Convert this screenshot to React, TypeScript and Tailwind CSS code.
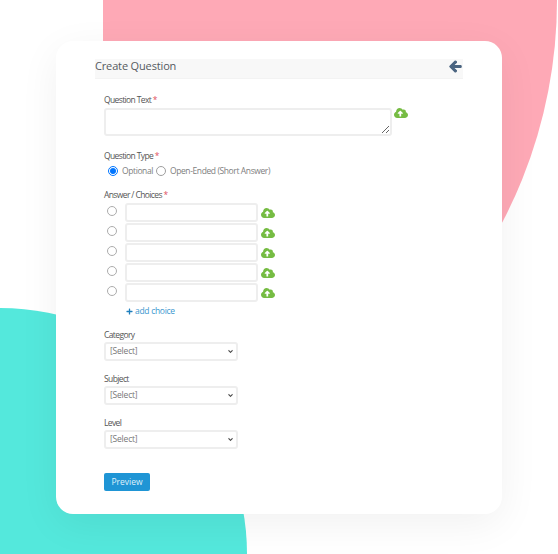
import { FaArrowLeft, FaChevronDown, FaCloudUploadAlt, FaPlus } from "react-icons/fa";

const choices = [1, 2, 3, 4, 5];
const dropdowns = ["Category", "Subject", "Level"];

function Upload({ className }: { className: string }) {
    return <FaCloudUploadAlt className={`text-[14px] text-[#76bc43] shrink-0 ${className}`} />;
}

function Required() {
    return <span className="text-[#e0505f]"> *</span>;
}

export default function App() {
    return (
        <div className="relative w-[558px] h-[554px] overflow-hidden bg-white font-['Open_Sans',sans-serif]">
            {/* background blobs */}
            <div className="absolute left-[103px] top-0 w-[454px] h-[467px] bg-[#fea9b6] rounded-br-[454px_467px]" />
            <div className="absolute left-0 top-[308px] w-[247px] h-[246px] bg-[#54e8dc] rounded-tr-[247px_246px]" />

            <div className="relative ml-[56px] pt-[41px] w-[446px]">
                <div className="h-[473px] bg-white rounded-[17px] shadow-[0_10px_40px_rgba(0,0,0,0.06)] pt-[18px] px-[39px]">
                    <div className="flex items-center justify-between h-[20px] bg-[#f8f8f8] border-b border-[#f3f3f3] pb-[5px] pr-[1px]">
                        <h1 className="text-[11px] leading-[14px] tracking-[-0.15px] text-[#555a60]">Create Question</h1>
                        <FaArrowLeft className="text-[13px] text-[#4a6480] stroke-[40]" />
                    </div>

                    <form className="pl-[9px] pt-[15px]">
                        <label className="block text-[8.5px] leading-[12px] tracking-[-0.62px] text-[#555]">
                            Question Text<Required />
                        </label>
                        <div className="flex items-start mt-[2px]">
                            <textarea className="block w-[288px] h-[28px] bg-white border-2 border-[#eeeeee] rounded-[3px]" />
                            <Upload className="ml-[2px] mt-[-2px]" />
                        </div>

                        <label className="block mt-[14px] text-[8.5px] leading-[12px] tracking-[-0.62px] text-[#555]">
                            Question Type<Required />
                        </label>
                        <div className="flex items-center mt-[3px] h-[13px] text-[8.5px] tracking-[-0.4px] text-[#808080]">
                            <input type="radio" name="qtype" defaultChecked className="w-[10px] h-[10px] ml-[4px] mr-[4px] mb-[2px]" />
                            <span>Optional</span>
                            <input type="radio" name="qtype" className="w-[10px] h-[10px] ml-[3px] mr-[4px] mb-[2px] opacity-70" />
                            <span>Open-Ended (Short Answer)</span>
                        </div>

                        <label className="block mt-[11px] text-[8.5px] leading-[12px] tracking-[-0.62px] text-[#555]">
                            Answer / Choices<Required />
                        </label>
                        <div className="flex flex-col gap-[1px] mt-[2px]">
                            {choices.map((c) => (
                                <div key={c} className="flex items-center h-[19px]">
                                    <input type="radio" name="answer" className="w-[10px] h-[10px] ml-[3px] mb-[3px] opacity-60" />
                                    <input type="text" className="w-[133px] h-[19px] ml-[8px] bg-white border-2 border-[#eeeeee] rounded-[3px]" />
                                    <Upload className="ml-[3px]" />
                                </div>
                            ))}
                        </div>
                        <a className="flex items-center gap-[2px] ml-[22px] mt-[3px] h-[12px] text-[8.5px] tracking-[-0.3px] text-[#3a97cf]">
                            <FaPlus className="text-[7px] text-[#1f7fbd]" />
                            add choice
                        </a>

                        <div className="flex flex-col gap-[12px] mt-[12px]">
                            {dropdowns.map((d) => (
                                <div key={d}>
                                    <label className="block text-[8.5px] leading-[12px] tracking-[-0.62px] text-[#555]">{d}</label>
                                    <div className="relative w-[134px] mt-[1px]">
                                        <select className="block w-full h-[19px] pl-[4px] appearance-none bg-white border-2 border-[#eeeeee] rounded-[3px] text-[8.5px] tracking-[-0.2px] text-[#777]">
                                            <option>[Select]</option>
                                        </select>
                                        <FaChevronDown className="absolute right-[5px] top-[7px] text-[5px] text-[#333] stroke-[30]" />
                                    </div>
                                </div>
                            ))}
                        </div>

                        <button type="button" className="block w-[46px] h-[18px] mt-[24px] bg-[#1f95d5] rounded-[2px] text-[8.5px] font-medium text-[#dff1fb]">
                            Preview
                        </button>
                    </form>
                </div>
            </div>
        </div>
    );
}
